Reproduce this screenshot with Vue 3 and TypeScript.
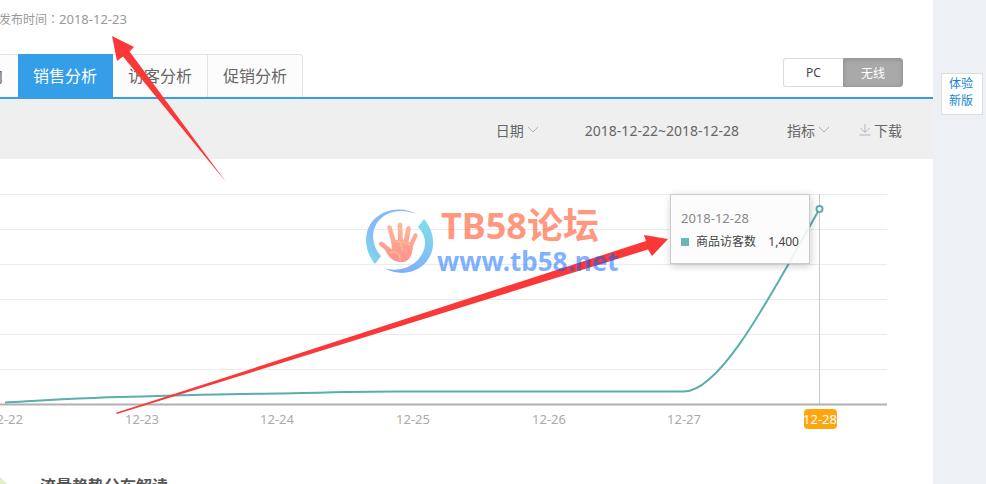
<script setup lang="ts">
import { ref } from 'vue'

const tabs = ['向', '销售分析', '访客分析', '促销分析']
const activeTab = ref('销售分析')

const devices = ['PC', '无线']
const activeDevice = ref('无线')

interface Tick {
  label: string
  x: number
}

const ticks: Tick[] = [
  { label: '12-22', x: 6 },
  { label: '12-23', x: 142 },
  { label: '12-24', x: 277 },
  { label: '12-25', x: 413 },
  { label: '12-26', x: 549 },
  { label: '12-27', x: 684 },
  { label: '12-28', x: 820 },
]
const selected = '12-28'
const gridLines = [35, 70, 105, 140, 175, 210]
</script>

<template>
  <div class="page">
    <main class="main">
      <p class="published">发布时间<span class="colon">：</span><time>2018-12-23</time></p>

      <div class="nav">
        <nav class="tabs">
          <button
            v-for="tab in tabs"
            :key="tab"
            type="button"
            class="tab"
            :class="{ active: tab === activeTab }"
            @click="activeTab = tab"
          >{{ tab }}</button>
        </nav>
        <div class="devices">
          <button
            v-for="device in devices"
            :key="device"
            type="button"
            class="device"
            :class="{ active: device === activeDevice }"
            @click="activeDevice = device"
          >{{ device }}</button>
        </div>
      </div>

      <div class="toolbar">
        <button type="button" class="tool">
          日期
          <svg width="12" height="8" viewBox="0 0 12 8"><path d="M1 1l5 5 5-5" /></svg>
        </button>
        <span class="range">2018-12-22~2018-12-28</span>
        <button type="button" class="tool metric">
          指标
          <svg width="12" height="8" viewBox="0 0 12 8"><path d="M1 1l5 5 5-5" /></svg>
        </button>
        <a href="#" class="tool">
          <svg width="12" height="12" viewBox="0 0 12 12"><path d="M6 0v8M1.500 4l4.500 4.500 4.500-4.500M0.500 11h11" /></svg>
          下载
        </a>
      </div>

      <section class="chart">
        <svg class="plot" viewBox="0 0 933 280">
          <line v-for="y in gridLines" :key="y" class="grid" x1="0" x2="887" :y1="y + 0.5" :y2="y + 0.5" />
          <line class="cursor" x1="819.500" x2="819.500" y1="35" y2="245" />
          <line class="axis" x1="0" x2="887" y1="245.500" y2="245.500" />
          <path
            class="series"
            d="M5 243.500C50 241 95 238 142 237.500C190 236 230 235 277 234.500C325 233.500 365 232.500 396 232.500H684C722 232.500 774 130 819.500 50"
          />
          <circle class="point" cx="819.500" cy="50" r="3" />
          <rect class="pill" x="804" y="250" width="33" height="20" rx="4" />
          <text
            v-for="tick in ticks"
            :key="tick.label"
            class="tick"
            :class="{ selected: tick.label === selected }"
            :x="tick.x"
            y="265"
          >{{ tick.label }}</text>
        </svg>
        <div class="tooltip">
          <div class="tip-date">2018-12-28</div>
          <div class="tip-row">
            <i class="swatch"></i>
            <span>商品访客数</span>
            <span class="tip-value">1,400</span>
          </div>
        </div>
      </section>

      <section class="summary">
        <i class="diamond"></i>
        <h2>流量趋势分布解读</h2>
      </section>
    </main>

    <aside class="side">
      <a href="#" class="trial">体验新版</a>
    </aside>

    <svg class="marks" width="986" height="484" viewBox="0 0 986 484">
      <defs>
        <linearGradient id="ringBlue" x1="0" y1="1" x2="1" y2="0">
          <stop offset="0" stop-color="#7fdcec" />
          <stop offset="0.35" stop-color="#84bdf7" />
          <stop offset="1" stop-color="#80b4f8" />
        </linearGradient>
        <linearGradient id="ringCyan" x1="0" y1="0" x2="0" y2="1">
          <stop offset="0" stop-color="#7fdfe8" />
          <stop offset="0.6" stop-color="#82c6f2" />
          <stop offset="1" stop-color="#80aff9" />
        </linearGradient>
        <linearGradient id="palm" gradientUnits="userSpaceOnUse" x1="400" y1="222" x2="400" y2="262">
          <stop offset="0" stop-color="#ffb89c" />
          <stop offset="1" stop-color="#ff918f" />
        </linearGradient>
      </defs>
      <g class="arrows">
        <path d="M112 36l22 11-4.500 4.500L226 182 123 56.500l-6 4.500z" />
        <path d="M668 239l-16 17-4-6.500L117 414l-1-1.200L646 241l-2-6z" />
      </g>
      <path fill="url(#ringBlue)" d="M416 214C403 206 382 208 371 223C363 235 365 252 375 264L381 256C373 247 370 234 377 223C385 211 401 208 416 214Z" />
      <path fill="url(#ringCyan)" d="M424 219C433 229 436 245 430 256C422 272 402 278 384 268C400 273 416 266 422 254C427 245 426 235 418 227Z" />
      <g fill="none" stroke="url(#palm)" stroke-linecap="round">
        <path stroke-width="4.500" d="M389.500 227.500l5 17" />
        <path stroke-width="4.800" d="M400 225l.500 18" />
        <path stroke-width="4.800" d="M408.500 228.500l-3 16" />
        <path stroke-width="4.200" d="M415.500 235.500l-6.500 14" />
        <path stroke-width="4.800" d="M381.500 244l11 9" />
      </g>
      <path fill="url(#palm)" d="M391 239C396 241 398 240 401 238C405 241 410 242 413 244C413 252 411 261 403 262C395 262.500 390 259 386 252L384 246C387 247 389 249 392 249Z" />
      <path class="creases" d="M390 253c6-3 11 1 10 8M395 241c6 1 10 1 15 4M400 242l3 9M388 229l2 1M399 229h3M407 232l3 1" />
      <g class="brand">
        <text class="brand-name" x="441" y="239">TB58论坛</text>
        <text class="brand-url" x="437" y="271">www.tb58.net</text>
      </g>
    </svg>
  </div>
</template>

<style>
body {
  background: #fff;
}
</style>

<style scoped>
.page {
  position: relative;
  display: flex;
  height: 100vh;
  overflow: hidden;
  font-family: 'Noto Sans', 'Noto Sans CJK SC', sans-serif;
  color: #666;
}

.main {
  flex: 1;
  min-width: 0;
  background: #fff;
}

button {
  margin: 0;
  font-family: inherit;
  cursor: pointer;
}

.published {
  margin: 0 0 0 -1px;
  padding: 9px 0 24px;
  font-size: 12px;
  line-height: 20px;
  color: #999;
}

.published time {
  font-size: 13px;
}

.colon {
  font-family: 'Noto Sans CJK TC', sans-serif;
}

.nav {
  display: flex;
  justify-content: space-between;
  height: 43px;
  border-bottom: 2px solid #349fe8;
}

.tabs {
  display: flex;
  margin-left: -28px;
}

.tab {
  padding: 0 15px;
  border: 0 solid #e2e2e2;
  border-width: 1px 1px 0 0;
  background: #fcfcfc;
  font-size: 16px;
  line-height: 42px;
  color: #666;
}

.tab:first-child {
  border-right-width: 0;
}

.tab:last-child {
  border-top-right-radius: 4px;
}

.tab.active {
  border-color: #349fe8;
  background: #349fe8;
  color: #fff;
}

.devices {
  display: flex;
  margin: 4px 30px 0 0;
  height: 29px;
}

.device {
  box-sizing: border-box;
  width: 60px;
  padding: 0;
  border: 1px solid #ddd;
  border-right: 0;
  border-radius: 3px 0 0 3px;
  background: #fff;
  font-size: 12px;
  color: #444;
}

.device + .device {
  border-radius: 0 3px 3px 0;
}

.device.active {
  border: 1px solid #999;
  background: #a9a9a9;
  box-shadow: inset 0 1px 4px rgba(0, 0, 0, 0.15);
  color: #fff;
}

.toolbar {
  display: flex;
  align-items: center;
  justify-content: flex-end;
  height: 60px;
  padding: 2px 31px 0 0;
  box-sizing: border-box;
  background: #efefef;
  font-size: 14px;
}

.tool {
  display: flex;
  align-items: center;
  gap: 3px;
  padding: 0;
  border: 0;
  background: none;
  font-size: 14px;
  color: #666;
  text-decoration: none;
}

.tool svg {
  fill: none;
  stroke: #b5b5b5;
}

.range {
  margin: 0 48px 0 46px;
}

.metric {
  margin-right: 29px;
}

.chart {
  position: relative;
}

.plot {
  display: block;
  width: 100%;
}

.grid {
  stroke: #ebebeb;
}

.cursor {
  stroke: #c8c8c8;
}

.axis {
  stroke: #b0b0b0;
  stroke-width: 2px;
}

.series {
  fill: none;
  stroke: #5aaeac;
  stroke-width: 2px;
}

.point {
  fill: #fff;
  stroke: #5aaeac;
  stroke-width: 2px;
}

.pill {
  fill: #ffa60f;
}

.tick {
  font-size: 13px;
  text-anchor: middle;
  fill: #aaa;
}

.tick.selected {
  fill: #fff;
}

.tooltip {
  position: absolute;
  top: 35px;
  right: 123px;
  box-sizing: border-box;
  width: 140px;
  height: 70px;
  padding: 12px 10px;
  border: 1px solid #ccc;
  background: rgba(252, 252, 252, 0.9);
  box-shadow: 1px 2px 8px rgba(0, 0, 0, 0.2);
  font-size: 12px;
  line-height: 26px;
  color: #444;
  white-space: nowrap;
}

.tip-date {
  font-size: 13px;
  line-height: 22px;
  color: #888;
}

.tip-row {
  display: flex;
  align-items: center;
}

.swatch {
  width: 8px;
  height: 8px;
  margin-right: 7px;
  background: #6bb5b3;
}

.tip-value {
  margin-left: auto;
}

.summary {
  display: flex;
  align-items: center;
  margin-top: 35px;
}

.diamond {
  width: 20px;
  height: 20px;
  margin: 0 35px 0 -15px;
  background: #e3efc8;
  transform: rotate(45deg);
}

h2 {
  margin: 0;
  font-size: 16px;
  line-height: 24px;
  color: #555;
}

.side {
  flex: none;
  width: 53px;
  padding: 73px 3px 0 8px;
  box-sizing: border-box;
  background: #edf0f5;
}

.trial {
  display: block;
  height: 42px;
  padding: 1px 7px;
  box-sizing: border-box;
  border: 1px solid #ddd;
  background: #fff;
  font-size: 12px;
  line-height: 17px;
  color: #1686d0;
  text-decoration: none;
}

.marks {
  position: absolute;
  top: 0;
  left: 0;
  pointer-events: none;
}

.arrows {
  fill: #fb3838;
}

.creases {
  fill: none;
  stroke: #ffc683;
}

.brand {
  font-weight: 700;
  opacity: 0.5;
}

.brand-name {
  font-size: 36px;
  fill: #f30;
}

.brand-url {
  font-size: 26px;
  fill: #06f;
}
</style>
